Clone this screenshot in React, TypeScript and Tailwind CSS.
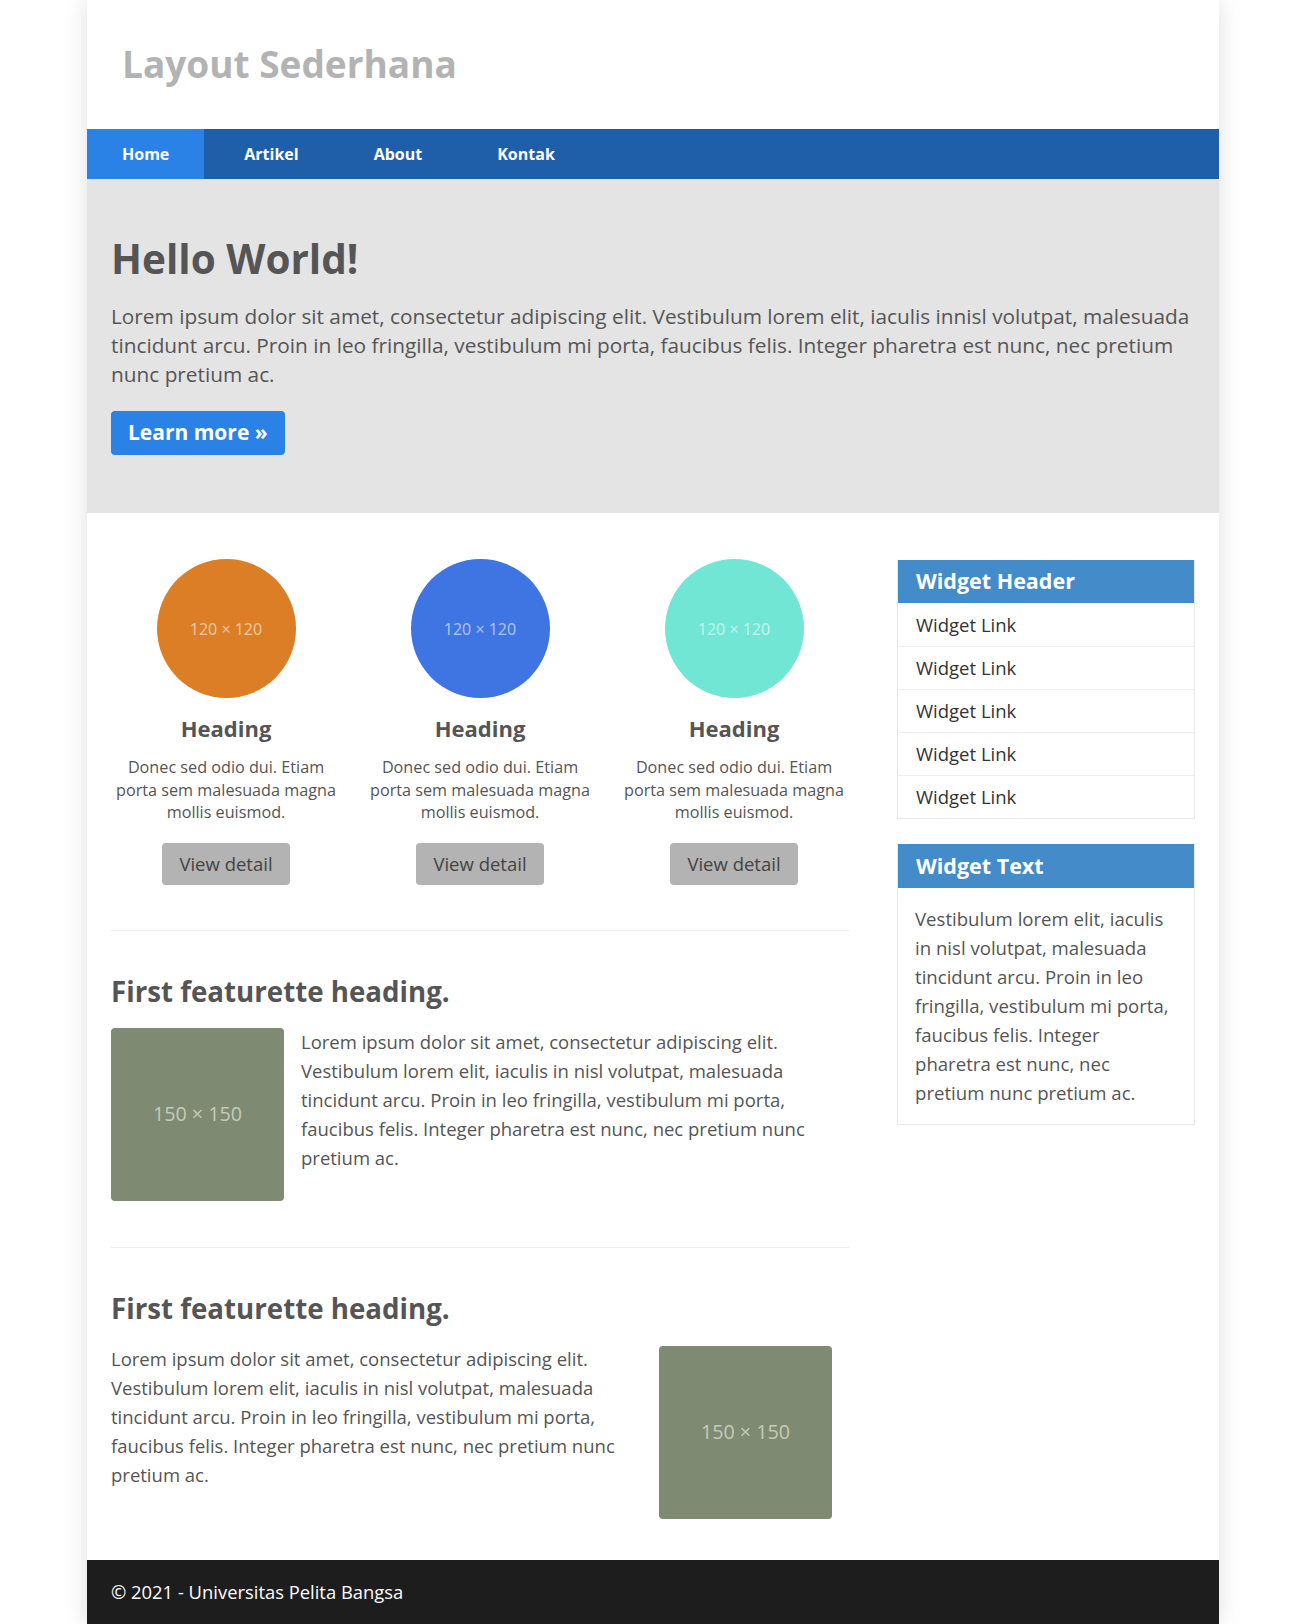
import React from "react";

const lorem =
  "Lorem ipsum dolor sit amet, consectetur adipiscing elit. Vestibulum lorem elit, iaculis in nisl volutpat, malesuada tincidunt arcu. Proin in leo fringilla, vestibulum mi porta, faucibus felis. Integer pharetra est nunc, nec pretium nunc pretium ac.";

const circles = [
  { bg: "bg-[#db7e26]" },
  { bg: "bg-[#3f74e3]" },
  { bg: "bg-[#72e6d4]" },
];

function Circle({ bg }: { bg: string }) {
  return (
    <div className={`w-[139px] h-[139px] rounded-full ${bg} flex items-center justify-center`}>
      <span className="text-[16px] text-white/60">120 × 120</span>
    </div>
  );
}

function Placeholder() {
  return (
    <div className="w-[173px] h-[173px] shrink-0 rounded-[4px] bg-[#7e8a71] flex items-center justify-center">
      <span className="text-[19.7px] text-[#c4cbbb]">150 × 150</span>
    </div>
  );
}

export default function App() {
  return (
    <div className="bg-white min-h-screen font-['Open_Sans',sans-serif] text-[#555]">
      <div className="ml-[87px] w-[1132px] bg-white shadow-[0_0_22px_rgba(0,0,0,0.13)]">
        {/* Header */}
        <header className="h-[129px] flex items-center pl-[35px]">
          <h1 className="text-[37px] font-bold text-[#b3b3b3] leading-none pb-[2px]">Layout Sederhana</h1>
        </header>

        {/* Nav */}
        <nav className="h-[50px] bg-[#1f5fa9] flex gap-[5px] text-[16px] font-bold text-white">
          <a className="px-[35px] flex items-center bg-[#2b82e6]">Home</a>
          <a className="px-[35px] flex items-center">Artikel</a>
          <a className="px-[35px] flex items-center">About</a>
          <a className="px-[35px] flex items-center">Kontak</a>
        </nav>

        {/* Jumbotron */}
        <section className="bg-[#e4e4e4] px-[24px] pt-[52px] pb-[58px]">
          <h2 className="text-[40.5px] font-bold text-[#555] leading-[56px]">Hello World!</h2>
          <p className="mt-[15px] text-[20.8px] leading-[29px] text-[#555]">
            Lorem ipsum dolor sit amet, consectetur adipiscing elit. Vestibulum lorem elit, iaculis innisl volutpat,
            malesuada tincidunt arcu. Proin in leo fringilla, vestibulum mi porta, faucibus felis. Integer pharetra est
            nunc, nec pretium nunc pretium ac.
          </p>
          <button className="mt-[22px] h-[44px] px-[17px] rounded-[4px] bg-[#2b82e6] text-white text-[21px] font-bold">
            Learn more »
          </button>
        </section>

        {/* Main */}
        <div className="flex px-[24px] pt-[46px] pb-[41px] gap-[48px]">
          <main className="w-[738px]">
            <div className="grid grid-cols-3 -mx-[12px]">
              {circles.map((c, i) => (
                <div key={i} className="px-[12px] flex flex-col items-center text-center">
                  <Circle bg={c.bg} />
                  <h3 className="mt-[15px] text-[22px] font-bold leading-[30px] text-[#555]">Heading</h3>
                  <p className="mt-[13px] text-[16.2px] leading-[22.5px] text-[#555]">
                    Donec sed odio dui. Etiam porta sem malesuada magna mollis euismod.
                  </p>
                  <button className="mt-[19px] h-[42px] px-[17px] rounded-[4px] bg-[#b3b3b3] text-[#444] text-[18.5px]">
                    View detail
                  </button>
                </div>
              ))}
            </div>

            <hr className="mt-[45px] border-0 border-t border-[#eee]" />

            <h2 className="mt-[41px] text-[27.7px] font-bold leading-[38px] text-[#555]">First featurette heading.</h2>
            <div className="mt-[18px] flex gap-[17px] items-start">
              <Placeholder />
              <p className="-mt-[1px] text-[18.5px] leading-[29px] text-[#555]">{lorem}</p>
            </div>

            <hr className="mt-[46px] border-0 border-t border-[#eee]" />

            <h2 className="mt-[41px] text-[27.7px] font-bold leading-[38px] text-[#555]">First featurette heading.</h2>
            <div className="mt-[19px] flex items-start">
              <p className="w-[530px] -mt-[2px] text-[18.5px] leading-[29px] text-[#555]">{lorem}</p>
              <div className="ml-[18px]">
                <Placeholder />
              </div>
            </div>
          </main>

          <aside className="w-[298px] pt-[1px]">
            <div className="border border-[#e8e8e8] border-t-0">
              <div className="h-[43px] bg-[#438bc9] flex items-center px-[18px] text-[21.5px] font-bold text-white">
                Widget Header
              </div>
              {[0, 1, 2, 3, 4].map((i) => (
                <div
                  key={i}
                  className={`h-[43px] flex items-center px-[18px] text-[18.5px] text-[#333] ${
                    i > 0 ? "border-t border-[#eee]" : ""
                  }`}
                >
                  Widget Link
                </div>
              ))}
            </div>

            <div className="mt-[25px] border border-[#e8e8e8] border-t-0">
              <div className="h-[44px] bg-[#438bc9] flex items-center px-[18px] text-[21.5px] font-bold text-white">
                Widget Text
              </div>
              <p className="pl-[17px] pr-[22px] pt-[16px] pb-[17px] text-[18.6px] leading-[29px] text-[#555]">
                Vestibulum lorem elit, iaculis in nisl volutpat, malesuada tincidunt arcu. Proin in leo fringilla,
                vestibulum mi porta, faucibus felis. Integer pharetra est nunc, nec pretium nunc pretium ac.
              </p>
            </div>
          </aside>
        </div>

        {/* Footer */}
        <footer className="h-[65px] bg-[#1d1d1d] flex items-center px-[24px] text-[18.4px] text-white">
          © 2021 - Universitas Pelita Bangsa
        </footer>
      </div>
    </div>
  );
}
